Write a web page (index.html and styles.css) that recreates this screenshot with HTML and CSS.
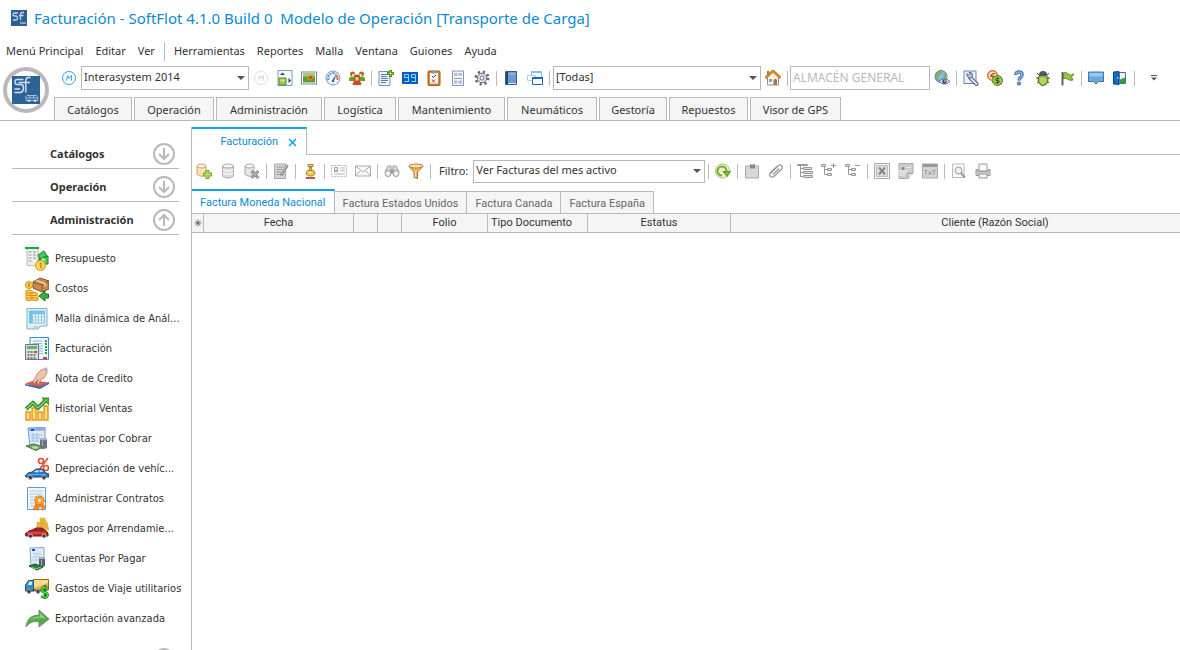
FILE: index.html
```html
<!DOCTYPE html>
<html lang="es">
<head>
<meta charset="utf-8">
<meta name="viewport" content="width=device-width, initial-scale=1">
<title>Facturación - SoftFlot</title>
<link rel="stylesheet" href="styles.css">
</head>
<body>
<header class="header">
  <div class="titlebar">
    <svg class="icon" viewBox="0 0 16 16"><rect width="16" height="16" fill="#2c5f95"/><path d="M7 3H3.500Q2 3 2 4.500T3.500 6H5Q6.500 6 6.500 8T5 10H2M13 2.500H11Q9.500 2.500 9.500 5V10M8 5.500H12.500" fill="none" stroke="#c3d3e3" stroke-width="1.300"/><path d="M9 12h6v2H9z" fill="#86a4c2"/></svg>
    <h1 class="title">Facturación - SoftFlot 4.1.0 Build 0&nbsp; Modelo de Operación [Transporte de Carga]</h1>
  </div>
  <nav class="menu" aria-label="Menú">
    <button class="menu-item">Menú Principal</button>
    <button class="menu-item">Editar</button>
    <button class="menu-item">Ver</button>
    <span class="menu-sep"></span>
    <button class="menu-item">Herramientas</button>
    <button class="menu-item">Reportes</button>
    <button class="menu-item">Malla</button>
    <button class="menu-item">Ventana</button>
    <button class="menu-item">Guiones</button>
    <button class="menu-item">Ayuda</button>
  </nav>
  <div class="ribbon">
    <button class="app-logo" aria-label="SoftFlot">
      <svg viewBox="0 0 46 46"><circle cx="23" cy="23" r="21" fill="#fff" stroke="#b9b9b9" stroke-width="4"/><rect x="9" y="9" width="28" height="28" fill="#2d6299"/><path d="M20.500 12.500H14Q12 12.500 12 15T14 17.500H18Q20.500 17.500 20.500 21T18 25.500H11.500M22 15.500H15.500M11.500 22H17M27.500 10.500H25.500Q22.800 10.500 22.800 14V25.500M20.500 15.500H27" fill="none" stroke="#d7e2ee" stroke-width="1.400"/><path d="M24 28.500h9.500q1.500 2 1.500 5H23v-4z" fill="none" stroke="#a9c0d8"/><path d="M24 31h10.500M27 28.500v2.500M30.500 28.500v2.500" stroke="#a9c0d8"/><circle cx="26" cy="33.800" r="1.300" fill="#cfdbe8"/><circle cx="32" cy="33.800" r="1.300" fill="#cfdbe8"/></svg>
    </button>
    <div class="ribbon-body">
      <div class="toolbar main-tools" role="toolbar">
        <button class="tool" aria-label="Modelo"><svg class="icon" viewBox="0 0 16 16"><circle cx="8" cy="8" r="6.500" fill="#fff" stroke="#29a4ea"/><path d="M5.500 10.500L6.500 5.500L8 8.500L10.500 5.500V10.500" fill="none" stroke="#29a4ea"/></svg></button>
        <span class="combo combo-company"><select class="field" aria-label="Empresa"><option>Interasystem 2014</option></select></span>
        <button class="tool" aria-label="Modelo inactivo"><svg class="icon" viewBox="0 0 16 16"><circle cx="8" cy="8" r="6.500" fill="#fff" stroke="#ddd"/><path d="M5.500 10.500L6.500 5.500L8 8.500L10.500 5.500V10.500" fill="none" stroke="#d5d5d5"/></svg></button>
        <button class="tool" aria-label="Distribución"><svg class="icon" viewBox="0 0 16 16"><rect x="1" y=".5" width="14" height="15" fill="#f3f6fc" stroke="#8b98b8"/><path d="M2 8h7v7H2z" fill="#9bcb4e" stroke="#5c8f28"/><path d="M3.500 9.500h4v2h-4z" fill="#c9e891"/><path d="M3 5L5.500 2.500L8 5zM11.500 8L14 10.500L11.500 13z" fill="#333d55"/></svg></button>
        <button class="tool" aria-label="Imagen"><svg class="icon" viewBox="0 0 16 16"><rect x=".5" y="2" width="15" height="12" fill="#fff" stroke="#7684a3"/><path d="M2 3.500h12v9H2z" fill="#5a9b35"/><path d="M2 3.500h12v3H2z" fill="#9ed06f"/><path d="M8.500 4L10 5.500L12 5L11.500 7L13 8.500L11 9L10 11L8.500 9.300L6 9.500L7 7.500L6 5.500L8 5.800z" fill="#f58d28"/><circle cx="9.500" cy="7.500" r="1.300" fill="#8c3e15"/></svg></button>
        <button class="tool" aria-label="Indicadores"><svg class="icon" viewBox="0 0 16 16"><circle cx="8" cy="8" r="7" fill="#eef5fd" stroke="#7696c5"/><path d="M3.500 10A5 5 0 0 1 11 4" fill="none" stroke="#4e8ed2" stroke-width="2" stroke-dasharray="2 1"/><path d="M11.500 5Q13 7 12.500 10" fill="none" stroke="#e4633a" stroke-width="2"/><path d="M6.500 11.500L11.500 3.500L8.500 12.500z" fill="#37507b"/></svg></button>
        <button class="tool" aria-label="Usuarios"><svg class="icon" viewBox="0 0 16 16"><path d="M0 8Q3 5 6 8V11H0zM10 8Q13 5 16 8V11H10z" fill="#669e2d"/><circle cx="3.500" cy="4" r="2.500" fill="#b36a29"/><circle cx="12.500" cy="4" r="2.500" fill="#b36a29"/><path d="M3 4h2.500v2.500H3zM10.500 4H13v2.500h-2.500z" fill="#ffd194"/><path d="M3.500 15Q4 10 8 10T12.500 15z" fill="#d5462e"/><circle cx="8" cy="7.500" r="3" fill="#99531d"/><path d="M6.500 7h3v2.500L8 11L6.500 9.500z" fill="#ffcf91"/></svg></button>
        <span class="sep"></span>
        <button class="tool" aria-label="Nuevo documento"><svg class="icon" viewBox="0 0 16 16"><path d="M1 1.500h11v14H1z" fill="#eef4fd" stroke="#7993bf"/><path d="M3 4.500h6M3 6.500h6M3 8.500h7M3 10.500h7M3 12.500h5" stroke="#5578b2"/><path d="M12.500 0v7M9 3.500h7" stroke="#4e8d19" stroke-width="3"/><path d="M12.500 1v5M10 3.500h5" stroke="#a9d950"/></svg></button>
        <button class="tool" aria-label="Contador"><svg class="icon" viewBox="0 0 16 16"><path d="M0 2h16v12H0z" fill="#075fc6"/><path d="M6.500 7.500H2.500V4.500H6.500V11.500H2.500M13.500 7.500H9.500V4.500H13.500V11.500H9.500" fill="none" stroke="#8cdcff"/></svg></button>
        <button class="tool" aria-label="Pendientes"><svg class="icon" viewBox="0 0 16 16"><rect x="2" y="1" width="12" height="14.500" rx="1" fill="#d98432" stroke="#a55c1d"/><path d="M4 3h8v10.500H4z" fill="#fff"/><path d="M6 .5h4v3H6z" fill="#8c98ac"/><path d="M6 9.500l3 3M9 9.500l-3 3" fill="none" stroke="#bc3028"/><path d="M6 6l1.500 1.500L10 5" fill="none" stroke="#333"/></svg></button>
        <button class="tool" aria-label="Formulario"><svg class="icon" viewBox="0 0 16 16"><path d="M2.500 1h11v14.500h-11z" fill="#f4f6fb" stroke="#8796b8"/><path d="M4 3h3.500v3H4zM8.500 3H12v3H8.500zM4 10.500h3.500v3H4zM8.500 10.500H12v3H8.500z" fill="#b2bfd8"/><path d="M4 8.500h8" stroke="#8c9cc0"/></svg></button>
        <button class="tool" aria-label="Configuración"><svg class="icon" viewBox="0 0 16 16"><circle cx="8" cy="8" r="6.200" fill="none" stroke="#636b7b" stroke-width="2.600" stroke-dasharray="2.200 2.670"/><circle cx="8" cy="8" r="4.700" fill="#dce1ea" stroke="#687286"/><circle cx="8" cy="8" r="2" fill="#fff" stroke="#687286"/></svg></button>
        <span class="sep"></span>
        <button class="tool" aria-label="Catálogo"><svg class="icon" viewBox="0 0 16 16"><path d="M2.500 1.500h11v13h-11z" fill="#6f9bca" stroke="#355d8f"/><path d="M3 2h2v12H3z" fill="#244570"/><path d="M5 13.500h8" stroke="#dce6f0"/><path d="M6 3h6v2H6z" fill="#8fb2d8"/></svg></button>
        <button class="tool" aria-label="Ventanas"><svg class="icon" viewBox="0 0 16 16"><path d="M4.500 1.500h10v6h-10z" fill="#fff" stroke="#8abbe9"/><path d="M4 2h11" stroke="#8abbe9" stroke-width="2"/><path d="M.5 5.500h8v5h-8z" fill="#fff" stroke="#a6ceef"/><path d="M5.500 7.500h10v7h-10z" fill="#fff" stroke="#1268c4"/><path d="M5 8h11" stroke="#1268c4" stroke-width="2"/></svg></button>
        <span class="sep"></span>
        <span class="combo combo-branch"><select class="field" aria-label="Sucursal"><option>[Todas]</option></select></span>
        <button class="tool" aria-label="Inicio"><svg class="icon" viewBox="0 0 16 16"><path d="M2.500 7L8 2L13.500 7V15H2.500z" fill="#fff5df" stroke="#8995ad"/><path d="M.5 8L8 1L15.500 8" fill="none" stroke="#c96a17" stroke-width="2.600"/><path d="M1 8L8 1.500L15 8" fill="none" stroke="#f5a947"/><path d="M2 1h2v4H2z" fill="#c96a17"/><path d="M8.500 15V10Q10.500 7.500 12 10V15z" fill="#b3723b"/><path d="M4 9h3v3H4z" fill="#6ca8dc"/></svg></button>
        <span class="sep"></span>
        <input class="field warehouse" aria-label="Almacén" placeholder="ALMACÉN GENERAL">
        <button class="tool" aria-label="Web"><svg class="icon" viewBox="0 0 16 16"><circle cx="7" cy="6.500" r="6" fill="#83bce7" stroke="#5879a4"/><path d="M3 2Q6 0 8 2L6 5L3.500 6L5 10L4 11Q0 7 3 2zM9 4L12 3L13 7L10 8z" fill="#7fb44c"/><path d="M5 11.500Q10.500 6 16 11.500Q10.500 17 5 11.500z" fill="#dce3ee" stroke="#66728d"/><circle cx="10.500" cy="11.500" r="2.200" fill="#344873"/><circle cx="11" cy="11" r=".8" fill="#fff"/></svg></button>
        <span class="sep"></span>
        <button class="tool" aria-label="Opciones"><svg class="icon" viewBox="0 0 16 16"><path d="M1 1h12v12.500H1z" fill="#eef4fd" stroke="#6e80ac"/><path d="M7 7.500L13.500 14" stroke="#526386" stroke-width="4" stroke-linecap="round"/><path d="M7 7.500L13.500 14" stroke="#dbe2ec" stroke-width="2" stroke-linecap="round"/><path d="M4 3.500L6 5.500L7.500 4L6 2.500Q9.500 2 9.500 5Q9.500 8.500 6 8Q3.500 7 4 3.500z" fill="#c9d2df" stroke="#526386"/></svg></button>
        <button class="tool" aria-label="Monedas"><svg class="icon" viewBox="0 0 16 16"><circle cx="5.500" cy="5.500" r="5" fill="#f1a66c" stroke="#b96026"/><circle cx="5.500" cy="5.500" r="3.700" fill="#ffe1bd"/><path d="M8 3.500Q4.500 2.500 4.500 5.500T8 7.500M3 5h4M3 6.500h4" fill="none" stroke="#b64f22"/><circle cx="10.500" cy="10.500" r="5" fill="#9cc94a" stroke="#4e7d21"/><path d="M12.500 8.500Q8.500 7.500 8.500 9.200T10.500 10.500T12.300 12T8.500 12.500M10.500 7v7" fill="none" stroke="#355c14"/></svg></button>
        <button class="tool" aria-label="Ayuda"><svg class="icon" viewBox="0 0 16 16"><path d="M5 5Q4.500 2 8 2T11 5Q11 6.500 9.500 7.500T8 10.500" fill="none" stroke="#48689f" stroke-width="3.400"/><path d="M5 4.500Q5 2 8 2T11 5Q11 6.500 9.500 7.500T8 10" fill="none" stroke="#82b9ec" stroke-width="1.500"/><circle cx="8" cy="13.500" r="1.600" fill="#6297d3" stroke="#48689f"/></svg></button>
        <button class="tool" aria-label="Depurar"><svg class="icon" viewBox="0 0 16 16"><path d="M2 3l3 3M14 3l-3 3M1 8h3M12 8h3M2 13l3-2M14 13l-3-2" stroke="#424b38"/><ellipse cx="8" cy="9.700" rx="5" ry="5.800" fill="#91bd38" stroke="#466818"/><path d="M4 5Q4 1 8 1T12 5Q8 8 4 5z" fill="#505865"/><path d="M8 6v9M6 8v5M10 8v5" stroke="#d4ec8b"/></svg></button>
        <button class="tool" aria-label="Bandera"><svg class="icon" viewBox="0 0 16 16"><path d="M3.500 2v13.500" stroke="#596778" stroke-width="2"/><path d="M4.500 3Q7 1.500 9 4T15 4L12.500 7L14 10Q10.500 11 8.500 9T4.500 9z" fill="#9ac43b" stroke="#5b8926"/></svg></button>
        <span class="sep"></span>
        <button class="tool" aria-label="Mensajes"><svg class="icon" viewBox="0 0 16 16"><path d="M.5 2h15v9.500h-5L8 14L5.500 11.500h-5z" fill="#69a9dd" stroke="#3f76a9"/><path d="M1.500 3h13v3.500h-13z" fill="#97c9ee"/></svg></button>
        <button class="tool" aria-label="Salir"><svg class="icon" viewBox="0 0 16 16"><path d="M7 2.500h6.500v11H7z" fill="#eef3fb" stroke="#616b82"/><path d="M8 9.500l5-2V13H8z" fill="#23a43b"/><path d="M1.500 2L7 1.500V14.500L1.500 14z" fill="#126fc6" stroke="#084689"/><path d="M5 8h1.500" stroke="#fff"/></svg></button>
        <span class="sep"></span>
        <button class="tool overflow" aria-label="Más"><svg class="icon" viewBox="0 0 16 16"><path d="M5 5.500h6" stroke="#555"/><path d="M5 7.500h6L8 10.500z" fill="#555"/></svg></button>
      </div>
      <nav class="modules" aria-label="Módulos">
        <button class="module">Catálogos</button>
        <button class="module">Operación</button>
        <button class="module">Administración</button>
        <button class="module">Logística</button>
        <button class="module">Mantenimiento</button>
        <button class="module">Neumáticos</button>
        <button class="module">Gestoría</button>
        <button class="module">Repuestos</button>
        <button class="module">Visor de GPS</button>
      </nav>
    </div>
  </div>
</header>
<div class="workspace">
  <aside class="sidebar">
    <button class="group">Catálogos<svg class="chev" viewBox="0 0 24 24"><circle cx="12" cy="12" r="10"/><path d="M12 6v11M7 12l5 5l5-5"/></svg></button>
    <button class="group">Operación<svg class="chev" viewBox="0 0 24 24"><circle cx="12" cy="12" r="10"/><path d="M12 6v11M7 12l5 5l5-5"/></svg></button>
    <button class="group" aria-expanded="true">Administración<svg class="chev" viewBox="0 0 24 24"><circle cx="12" cy="12" r="10"/><path d="M12 18V7M7 12l5-5l5 5"/></svg></button>
    <nav class="links" aria-label="Administración">
      <a class="link" href="#presupuesto"><svg class="big" viewBox="0 0 24 24"><path d="M2 1h11v18l-2-1l-2 1l-2-1l-2 1l-3-1z" fill="#eee" stroke="#bbb"/><path d="M0 1h14" stroke="#12a83a" stroke-width="2"/><path d="M3.500 5h3M8 5h3M3.500 8h3M8 8h3M3.500 11h3M8 11h3M3.500 14h3" stroke="#999"/><path d="M13 8l6-4l3 5l-7 4zM14 12l9-3v8H13z" fill="#43cb53" stroke="#12852a"/><circle cx="18" cy="13" r="2" fill="#a7f09b"/><circle cx="15.500" cy="18.500" r="5" fill="#ffd35c" stroke="#dc911c"/><path d="M14.500 17l1.500-1v5.500" fill="none" stroke="#b46811"/></svg><span class="link-text">Presupuesto</span></a>
      <a class="link" href="#costos"><svg class="big" viewBox="0 0 24 24"><path d="M8 5l7-4l9 3v8l-7 3l-9-4z" fill="#c88a4c" stroke="#80522a"/><path d="M8 5l9 3l7-4M17 8v7" fill="none" stroke="#8a5728"/><path d="M11 3.500l9 3v3" fill="none" stroke="#efd3a4" stroke-width="1.500"/><circle cx="4" cy="8" r="3.500" fill="#ffcf52" stroke="#d68c19"/><path d="M4 6v4" stroke="#a96613"/><g fill="#ffd35b" stroke="#d68c19"><ellipse cx="4" cy="22" rx="3.500" ry="1.500"/><ellipse cx="4" cy="19.500" rx="3.500" ry="1.500"/><ellipse cx="4" cy="17" rx="3.500" ry="1.500"/><ellipse cx="4" cy="14.500" rx="3.500" ry="1.500"/><ellipse cx="10" cy="22" rx="3.500" ry="1.500"/><ellipse cx="10" cy="19.500" rx="3.500" ry="1.500"/><ellipse cx="9" cy="17" rx="3.500" ry="1.500"/></g><path d="M14 19l6-5v3h3.500v4H20v3z" fill="#38b33a" stroke="#11721f"/></svg><span class="link-text">Costos</span></a>
      <a class="link" href="#malla"><svg class="big" viewBox="0 0 24 24"><path d="M2 1.500h20V19h-6l-3 3H2z" fill="#e1f1f5" stroke="#8fabb7"/><path d="M4.500 4h15v12h-15z" fill="#fff" stroke="#7bbfe7"/><path d="M4.500 4h15v3h-15zM4.500 4h3v12h-3z" fill="#63c4f3"/><path d="M7.500 4v12M10.500 4v12M13.500 4v12M16.500 4v12M4.500 7h15M4.500 10h15M4.500 13h15" stroke="#8ac6e2"/><path d="M9 19l-1 4l8-4z" fill="#bfcfd6"/></svg><span class="link-text">Malla dinámica de Anál...</span></a>
      <a class="link" href="#facturacion"><svg class="big" viewBox="0 0 24 24"><path d="M5 .5h18.500v22H5z" fill="#eff6ff" stroke="#4586d4"/><path d="M8 4h9M8 6.500h9M14 9h4M14 11.500h4M14 14h4M14 16.500h4" stroke="#92b7e7"/><path d="M21 3v15" stroke="#12a447" stroke-width="2" stroke-dasharray="2 1"/><path d="M18 21h4" stroke="#e93030" stroke-width="2"/><path d="M.5 7.500h13v15H.5z" fill="#dce2df" stroke="#6d7872"/><path d="M2 9h10v3H2z" fill="#64b267"/><path d="M2.500 15h9M2.500 18h9M2.500 21h9" stroke="#7b847f" stroke-width="2" stroke-dasharray="2 1"/><path d="M10 15h2" stroke="#e23e30" stroke-width="2"/></svg><span class="link-text">Facturación</span></a>
      <a class="link" href="#nota"><svg class="big" viewBox="0 0 24 24"><path d="M0 16.500l9-3l15 2l-9 5.500z" fill="#e35854"/><path d="M0 17l15 2.500l9-4.500v2l-9 5L0 18.500z" fill="#426fa8"/><path d="M9 13l3-6l4-4q3-2 5 0l1 3l-3 5l-3 1l-2 5l-2-.5l1-4l-3 4l-2-.5z" fill="#f0c1a4" stroke="#9b7465" stroke-width=".7"/><path d="M18 2l4-2l1 5z" fill="#aeb4c2"/></svg><span class="link-text">Nota de Credito</span></a>
      <a class="link" href="#historial"><svg class="big" viewBox="0 0 24 24"><g fill="#ffe182" stroke="#e49415" stroke-width="1.400"><path d="M1 15h4v8H1zM7 11h4v12H7zM13 15h4v8h-4zM19 9h4v14h-4z"/></g><path d="M1 12L8 6L13 11L21 3" fill="none" stroke="#298b2d" stroke-width="4"/><path d="M17 1h7v7z" fill="#48b33e" stroke="#298b2d"/><path d="M1 12L8 6L13 11L21 3" fill="none" stroke="#83d663" stroke-width="1.500"/></svg><span class="link-text">Historial Ventas</span></a>
      <a class="link" href="#cobrar"><svg class="big" viewBox="0 0 24 24"><path d="M3 1l17-.5v20H5z" fill="#d9e9fa" stroke="#7396c1"/><path d="M3 1l17-.5v3L3 4z" fill="#83aee3"/><path d="M6 3h3" stroke="#3246c9" stroke-width="2"/><path d="M6 8h11M6 11h9M6 14h8M8 6v9M12 6v9" stroke="#a4bfdc"/><path d="M15 12h7v9q-4 2-7 0z" fill="#697480"/><ellipse cx="18.500" cy="12" rx="3.500" ry="1.300" fill="#aeb9c3"/><path d="M17.500 14v7" stroke="#a4adb5"/><path d="M1 19l8-2l9 3l-7 3.500z" fill="#77aa61" stroke="#3d773e"/><ellipse cx="10" cy="20.500" rx="3" ry="1.200" fill="#c1dfab"/></svg><span class="link-text">Cuentas por Cobrar</span></a>
      <a class="link" href="#depreciacion"><svg class="big" viewBox="0 0 24 24"><g fill="none" stroke="#e34c27" stroke-width="1.600"><circle cx="16" cy="4" r="2.500"/><circle cx="21" cy="11" r="2.500"/><path d="M23 1L14 13"/></g><path d="M0 19l3-3l4-1l4-3h6l4 4l3 1v3H1z" fill="#2a74bd" stroke="#174981"/><path d="M8.500 15l3-2h2v2.500zM14.500 13h2l2 2h-4z" fill="#bddcf5"/><path d="M2 17.500h19" stroke="#68aee9"/><circle cx="5.500" cy="20.500" r="2" fill="#333" stroke="#aaa"/><circle cx="19" cy="20.500" r="2" fill="#333" stroke="#aaa"/></svg><span class="link-text">Depreciación de vehíc...</span></a>
      <a class="link" href="#contratos"><svg class="big" viewBox="0 0 24 24"><path d="M2.500 .5h18v22h-18z" fill="#edf6ff" stroke="#5e9ddd"/><path d="M5 4h13M5 7h13M5 10h6M5 13h4M5 16h4M5 19h4" stroke="#b1c4d8"/><path d="M11 16L8 23l3-1l2 1.500l2-5l3 5l1-2.500h2l-4-5z" fill="#f88b24" stroke="#df641d" stroke-width=".6"/><circle cx="14.500" cy="13.500" r="4.500" fill="#ffb437" stroke="#e46d1e" stroke-width="1.500" stroke-dasharray="2 .7"/><circle cx="14.500" cy="13.500" r="2.300" fill="#ffe28e" stroke="#e9842c"/></svg><span class="link-text">Administrar Contratos</span></a>
      <a class="link" href="#arrendamiento"><svg class="big" viewBox="0 0 24 24"><g fill="#ffd95c" stroke="#d9911f" stroke-width=".6"><path d="M12 5h5v2h-5zM12 7h5v2h-5zM12 9h5v2h-5zM15 1h5v2h-5zM15.500 3h5v2h-5zM17 5h5v2h-5zM17.500 7h5v2h-5zM18 9h5v2h-5zM18.500 11h5v2h-5z"/></g><path d="M0 17l4-3l3-1l4-2h6l4 3l2 2v3H1z" fill="#c22520" stroke="#7c1015"/><path d="M8 14l3-2h2v2zM14 12h3l2 2h-5z" fill="#57383b"/><path d="M2 16h19" stroke="#ee6b59"/><circle cx="5.500" cy="19" r="2" fill="#333" stroke="#bbb"/><circle cx="19" cy="19" r="2" fill="#333" stroke="#bbb"/></svg><span class="link-text">Pagos por Arrendamie...</span></a>
      <a class="link" href="#pagar"><svg class="big" viewBox="0 0 24 24"><path d="M5 1l14-.5v18L6 20z" fill="#dcecfb" stroke="#88a7cc"/><path d="M7 3h3" stroke="#2845ce" stroke-width="2"/><path d="M8 7h8M8 10h7M8 13h5" stroke="#a4bfdc"/><path d="M14 11h6v8q-3 2-6 0z" fill="#55616d"/><ellipse cx="17" cy="11" rx="3" ry="1.200" fill="#a9b5bf"/><path d="M16.500 13v7" stroke="#a7b3bd"/><path d="M4 19l6-2l8 3l-6 3z" fill="#278338" stroke="#155325"/><path d="M6 20l5 2l5-2" fill="none" stroke="#8fca92"/></svg><span class="link-text">Cuentas Por Pagar</span></a>
      <a class="link" href="#gastos"><svg class="big" viewBox="0 0 24 24"><path d="M8.500 2.500h15V13h-15z" fill="#edab42" stroke="#9c681e"/><path d="M9 3h14v3L9 11z" fill="#ffd990"/><path d="M.5 8l3-4.500h5V14h-8z" fill="#348bc8" stroke="#195984"/><path d="M2.500 8l2-3.500h2.500V8z" fill="#c7e9fb"/><path d="M1 13.500h17" stroke="#444" stroke-width="1.500"/><circle cx="4" cy="14.500" r="2" fill="#333" stroke="#aaa"/><circle cx="13" cy="14.500" r="2" fill="#333" stroke="#aaa"/><path d="M23 11.500Q17 9.500 17 12.500T20 15.500T22.500 18.500T16 19.500M20 8v14" fill="none" stroke="#17852a" stroke-width="2.600"/><path d="M23 11.500Q17 9.500 17 12.500T20 15.500T22.500 18.500T16 19.500" fill="none" stroke="#5ed84f" stroke-width="1.300"/></svg><span class="link-text">Gastos de Viaje utilitarios</span></a>
      <a class="link" href="#exportacion"><svg class="big" viewBox="0 0 24 24"><path d="M1 20Q2 8 14 8V3L24 12L14 20V15Q6 13 1 20z" fill="#58a94d" stroke="#73906f"/><path d="M4 14Q8 9.500 15 9.500V6L21 11.500Q10 10 4 14z" fill="#8bcd79"/></svg><span class="link-text">Exportación avanzada</span></a>
    </nav>
    <button class="group" aria-label="Siguiente grupo"><svg class="chev" viewBox="0 0 24 24"><circle cx="12" cy="12" r="10"/><path d="M12 6v11M7 12l5 5l5-5"/></svg></button>
  </aside>
  <main class="document">
    <div class="doc-tabs">
      <div class="doc-tab"><span>Facturación</span><button class="close" aria-label="Cerrar"><svg viewBox="0 0 9 9"><path d="M1 1l7 7M8 1l-7 7" stroke="#0ba3ee" stroke-width="1.500"/></svg></button></div>
    </div>
    <div class="toolbar doc-tools" role="toolbar">
      <button class="tool" aria-label="Agregar"><svg class="icon" viewBox="0 0 16 16"><path d="M1 3v8.500Q5.500 15 10 11.500V3z" fill="#fae1b5" stroke="#cda16b"/><ellipse cx="5.500" cy="3" rx="4.500" ry="2" fill="#fff2d8" stroke="#cda16b"/><path d="M11.500 7v9M7 11.500h9" stroke="#75a72b" stroke-width="4"/><path d="M11.500 8v7M8 11.500h7" stroke="#b7dc62" stroke-width="2"/></svg></button>
      <button class="tool" aria-label="Datos"><svg class="icon" viewBox="0 0 16 16"><path d="M2.500 3v10Q8 17 13.500 13V3z" fill="#ddd" stroke="#aaa"/><ellipse cx="8" cy="3" rx="5.500" ry="2" fill="#f5f5f5" stroke="#aaa"/><path d="M2.500 6.500Q8 9.500 13.500 6.500M2.500 10Q8 13 13.500 10" fill="none" stroke="#fff"/></svg></button>
      <button class="tool" aria-label="Eliminar"><svg class="icon" viewBox="0 0 16 16"><path d="M1 3v8.500Q5.500 15 10 11.500V3z" fill="#e6e6e6" stroke="#aaa"/><ellipse cx="5.500" cy="3" rx="4.500" ry="2" fill="#f6f6f6" stroke="#aaa"/><path d="M7.500 8l7 7M14.500 8l-7 7" stroke="#888" stroke-width="3"/><path d="M7.500 8l7 7M14.500 8l-7 7" stroke="#c5c5c5"/></svg></button>
      <span class="sep"></span>
      <button class="tool" aria-label="Modificar"><svg class="icon" viewBox="0 0 16 16"><path d="M1.500 1h11v14.500h-11z" fill="#d5d5d5" stroke="#aaa"/><path d="M3.500 4h7M3.500 6.500h6M3.500 9h4M3.500 11.500h3" stroke="#999"/><path d="M8 12.500L14.500 2" stroke="#8c8c8c" stroke-width="3"/><path d="M8.500 11L14 2" stroke="#ccc"/></svg></button>
      <span class="sep"></span>
      <button class="tool" aria-label="Timbrar"><svg class="icon" viewBox="0 0 16 16"><path d="M4 15h9" stroke="#b45a49" stroke-width="2"/><ellipse cx="8.500" cy="10" rx="4.300" ry="3" fill="#edc654" stroke="#af7f23"/><path d="M7.500 7.500V4h2v3.500z" fill="#f0cb5f" stroke="#af7f23"/><path d="M6 1.500h5v2H6z" fill="#f5dc85" stroke="#af7f23"/><path d="M6 9.500h4" stroke="#fff0a6"/></svg></button>
      <span class="sep"></span>
      <button class="tool" aria-label="Contacto"><svg class="icon" viewBox="0 0 16 16"><path d="M.5 2.500h15v11H.5z" fill="#fafafa" stroke="#bbb" stroke-dasharray="2 1"/><path d="M3 4h4v5H3z" fill="#aaa"/><circle cx="5" cy="6" r="1" fill="#fff"/><path d="M9 5h5M9 7.500h5M3 11h11" stroke="#bbb"/></svg></button>
      <button class="tool" aria-label="Correo"><svg class="icon" viewBox="0 0 16 16"><path d="M.5 3h15v10H.5z" fill="#fafafa" stroke="#aaa"/><path d="M.5 3L8 9L15.500 3M1 12.500L5.500 7.500M15 12.500L10.500 7.500" fill="none" stroke="#aaa"/></svg></button>
      <span class="sep"></span>
      <button class="tool" aria-label="Buscar"><svg class="icon" viewBox="0 0 16 16"><path d="M1 9L4 3h3v8M15 9l-3-6H9v8" fill="#ddd" stroke="#999"/><circle cx="4" cy="10.500" r="3" fill="#eee" stroke="#999"/><circle cx="12" cy="10.500" r="3" fill="#eee" stroke="#999"/><path d="M7 6h2v4H7z" fill="#999"/></svg></button>
      <button class="tool" aria-label="Filtrar"><svg class="icon" viewBox="0 0 16 16"><path d="M1 3.500L6 9v5.500l3.500 1V9L15 3.500z" fill="#edb46b" stroke="#b97836"/><ellipse cx="8" cy="3" rx="7" ry="2" fill="#ffe1ad" stroke="#b97836"/><path d="M7.500 8v6" stroke="#ffe0b2"/></svg></button>
      <span class="sep"></span>
      <label class="filter-label" for="filtro">Filtro:</label>
      <span class="combo combo-filter"><select class="field" id="filtro"><option>Ver Facturas del mes activo</option></select></span>
      <span class="sep"></span>
      <button class="tool" aria-label="Actualizar"><svg class="icon" viewBox="0 0 16 16"><circle cx="7.500" cy="8" r="7" fill="#e8f5c9" stroke="#a1ca64"/><path d="M7 12.500A4.500 4.500 0 1 1 11.500 8" fill="none" stroke="#76aa38" stroke-width="2"/><path d="M8 8.500h7.500L12 13.500z" fill="#80b83b" stroke="#5e942c"/></svg></button>
      <span class="sep"></span>
      <button class="tool" aria-label="Nota"><svg class="icon" viewBox="0 0 16 16"><path d="M1.500 3h13v12h-13z" fill="#d8d8d8" stroke="#aaa"/><path d="M6 1h5v4.500H6z" fill="#888"/><path d="M7 1.500h3" stroke="#ccc"/></svg></button>
      <button class="tool" aria-label="Adjuntar"><svg class="icon" viewBox="0 0 16 16"><path d="M3 10L10 3Q12 1 13.500 2.500T13.500 6L6.500 13Q4.500 15 2.500 13.500T2.500 9.500L9.500 3M5 11.500L11 5.500" fill="none" stroke="#999" stroke-width="1.300"/></svg></button>
      <span class="sep"></span>
      <button class="tool" aria-label="Árbol"><svg class="icon" viewBox="0 0 16 16"><path d="M3.500 2v12M4 5.500h2M4 9.500h2M4 13.500h2" stroke="#999"/><path d="M.5 1.500h10v1H.5zM6.500 4.500h8v2h-8zM6.500 8.500h9v2h-9zM6.500 12.500h9v2h-9z" fill="#ddd" stroke="#999"/></svg></button>
      <button class="tool" aria-label="Expandir"><svg class="icon" viewBox="0 0 16 16"><path d="M.5 1.500h4v2h-4zM6.500 5.500h4v2h-4zM6.500 10.500h4v2h-4z" fill="#ddd" stroke="#999"/><path d="M3.500 4v7.500H6M3.500 6.500H6M12.500 0v5M10 2.500h5" fill="none" stroke="#999"/></svg></button>
      <button class="tool" aria-label="Contraer"><svg class="icon" viewBox="0 0 16 16"><path d="M.5 1.500h4v2h-4zM6.500 5.500h4v2h-4zM6.500 10.500h4v2h-4z" fill="#ddd" stroke="#999"/><path d="M3.500 4v7.500H6M3.500 6.500H6M10 2.500h5" fill="none" stroke="#999"/></svg></button>
      <span class="sep"></span>
      <button class="tool" aria-label="Excel"><svg class="icon" viewBox="0 0 16 16"><path d="M.5 .5h15v15H.5z" fill="#f5f5f5" stroke="#aaa"/><path d="M2.500 2.500h11v11h-11z" fill="#ddd" stroke="#bbb"/><path d="M5 4.500l6 7M11 4.500l-6 7" stroke="#888" stroke-width="2"/></svg></button>
      <button class="tool" aria-label="Imagen"><svg class="icon" viewBox="0 0 16 16"><path d="M1 .5h14V10l-5 5.500H1z" fill="#ccc" stroke="#aaa"/><path d="M1 7h10l-5 6H1z" fill="#ddd"/><circle cx="5" cy="5.500" r="1.500" fill="#888"/><path d="M8 4.500h5" stroke="#eee"/><path d="M10 15V10.500h5" fill="#eee" stroke="#999"/></svg></button>
      <button class="tool" aria-label="Texto"><svg class="icon" viewBox="0 0 16 16"><path d="M.5 1h15v14H.5z" fill="#d5d5d5" stroke="#aaa"/><path d="M1 2.500h14" stroke="#999" stroke-width="3"/><path d="M2.500 7.500h3M4 7.500V12M6.500 8.500l3 3.500M9.500 8.500l-3 3.500M10.500 7.500h3M12 7.500V12" stroke="#999" fill="none"/></svg></button>
      <span class="sep"></span>
      <button class="tool" aria-label="Vista previa"><svg class="icon" viewBox="0 0 16 16"><path d="M1.500 1h11.500v13.500H1.500z" fill="#fafafa" stroke="#bbb"/><circle cx="7.500" cy="7.500" r="3.500" fill="#eee" stroke="#999"/><path d="M10 10l4 4.500" stroke="#999" stroke-width="2"/></svg></button>
      <button class="tool" aria-label="Imprimir"><svg class="icon" viewBox="0 0 16 16"><path d="M4 1h8v7H4z" fill="#fafafa" stroke="#999"/><path d="M1 6.500h2v2h10v-2h2v6H1z" fill="#ccc" stroke="#999"/><path d="M4 11h8v4H4z" fill="#f5f5f5" stroke="#999"/></svg></button>
    </div>
    <div class="sheets" role="tablist">
      <button class="sheet active" role="tab" aria-selected="true">Factura Moneda Nacional</button>
      <button class="sheet" role="tab">Factura Estados Unidos</button>
      <button class="sheet" role="tab">Factura Canada</button>
      <button class="sheet" role="tab">Factura España</button>
    </div>
    <div class="grid-area">
      <table class="grid">
        <colgroup><col class="c-mark"><col class="c-date"><col class="c-flag"><col class="c-flag"><col class="c-folio"><col class="c-type"><col class="c-status"><col class="c-client"></colgroup>
        <thead><tr>
          <th scope="col"><svg class="mark" viewBox="0 0 8 8"><path d="M4 .5v7M.5 4h7M1.500 1.500l5 5M6.500 1.500l-5 5" stroke="#555" stroke-width=".8"/></svg></th>
          <th scope="col">Fecha</th><th></th><th></th><th scope="col">Folio</th><th scope="col" class="start">Tipo Documento</th><th scope="col">Estatus</th><th scope="col">Cliente (Razón Social)</th>
        </tr></thead>
      </table>
    </div>
  </main>
</div>
</body>
</html>
```

FILE: styles.css
```css
* { box-sizing: border-box; }

:root {
  --line: #b9b9b9;
  --accent: #0ba3ee;
  --accent-text: #0a8ad8;
  --panel: #f5f5f5;
  --ui: "Noto Sans", "Open Sans", sans-serif;
  --small: "DejaVu Sans Condensed", "Noto Sans", sans-serif;
}

body {
  margin: 0;
  height: 100vh;
  display: flex;
  flex-direction: column;
  overflow: hidden;
  background: #fff;
  color: #333;
  font: 11px/16px var(--ui);
}

button, select, input {
  font: inherit;
  color: inherit;
  margin: 0;
  padding: 0;
  border: 0;
  border-radius: 0;
  background: none;
}

svg { display: block; flex: none; }
.icon { width: 16px; height: 16px; }
.header { flex: none; border-bottom: 1px solid var(--line); }

.titlebar {
  display: flex;
  align-items: center;
  gap: 7px;
  height: 36px;
  padding-left: 11px;
}
.title { margin: 0; font-size: 15px; font-weight: 400; line-height: 22px; color: var(--accent-text); white-space: nowrap; }

.menu { display: flex; align-items: center; gap: 12px; height: 30px; padding-left: 6px; }
.menu-item { white-space: nowrap; }
.menu-sep { width: 1px; height: 19px; margin: 0 -3px; background: var(--line); }

.ribbon { display: flex; }
.app-logo { flex: none; width: 46px; height: 46px; margin: 1px 5px 0 3px; }
.ribbon-body { flex: 1; min-width: 0; }

.toolbar { display: flex; align-items: center; }
.tool { flex: none; width: 24px; height: 24px; display: flex; align-items: center; justify-content: center; }
.sep { flex: none; width: 1px; height: 15px; margin: 0 2px; background: var(--line); }
.main-tools { height: 24px; padding-left: 3px; }
.overflow { margin-left: 5px; }

.field { display: block; width: 100%; height: 24px; border: 1px solid var(--line); background: #fff; appearance: none; outline: 0; }
.combo { position: relative; flex: none; }
.combo select { padding: 0 20px 2px 2px; }
.combo::after {
  content: "";
  position: absolute;
  right: 4px;
  top: 50%;
  margin-top: -2px;
  border: 4px solid transparent;
  border-top-color: #555;
  border-bottom-width: 0;
  pointer-events: none;
}
.combo-company { width: 168px; }
.combo-branch { width: 208px; margin-left: 1px; }
.combo-filter { width: 232px; margin-right: 1px; }
.combo-filter .field { height: 23px; }
.warehouse { flex: none; width: 140px; padding: 0 2px 2px; font-size: 12px; }
.warehouse::placeholder { color: #b9b9b9; opacity: 1; }

.modules {
  display: grid;
  grid-template-columns: 78px 80px 106px 72px 107px 90px 68px 79px 91px;
  gap: 2px;
  padding-top: 7px;
}
.module { height: 23px; padding-top: 2px; border: 1px solid var(--line); border-bottom: 0; background: var(--panel); white-space: nowrap; }

.workspace { flex: 1; min-height: 0; display: flex; }
.sidebar { flex: none; width: 191px; padding: 15px 12px 0; overflow: hidden; }
.group {
  display: flex;
  align-items: center;
  justify-content: space-between;
  width: 167px;
  height: 33px;
  padding: 4px 3px 0 38px;
  border-bottom: 1px solid var(--line);
  font-weight: 700;
}
.chev { width: 24px; height: 24px; margin-left: auto; fill: none; stroke: #b9b9b9; stroke-width: 2; }
.links { padding: 9px 0 7px 13px; }
.link { display: flex; align-items: center; gap: 6px; height: 30px; color: inherit; text-decoration: none; font-family: var(--small); }
.big { width: 24px; height: 24px; }
.link-text { white-space: nowrap; }

.document { flex: 1; min-width: 0; display: flex; flex-direction: column; border-left: 1px solid var(--line); margin-top: 6px; }
.doc-tabs { display: flex; height: 28px; border-bottom: 1px solid var(--line); font: 11px/16px Roboto, sans-serif; }
.doc-tab {
  display: flex;
  align-items: center;
  justify-content: flex-end;
  gap: 10px;
  width: 115px;
  height: 28px;
  padding-right: 9px;
  border-top: 2px solid var(--accent);
  border-right: 1px solid var(--line);
  background: #fff;
  color: var(--accent-text);
}
.close { width: 9px; height: 9px; }
.doc-tools { height: 34px; padding-bottom: 2px; }
.filter-label { margin: 0 5px 0 6px; white-space: nowrap; }

.sheets { display: flex; align-items: flex-end; height: 24px; }
.sheet {
  height: 22px;
  padding: 2px 8px 0;
  border: 1px solid var(--line);
  border-bottom: 0;
  border-left: 0;
  background: var(--panel);
  font: 11px/16px Roboto, sans-serif;
  color: #666;
  white-space: nowrap;
}
.sheet.active { height: 24px; border-top: 2px solid var(--accent); background: #fff; color: var(--accent-text); }

.grid-area { flex: 1; overflow: hidden; border-top: 1px solid var(--line); }
.grid { width: 1068px; border-collapse: separate; border-spacing: 0; table-layout: fixed; font: 11px/16px Roboto, sans-serif; }
.grid th {
  height: 19px;
  padding: 0;
  border-right: 1px solid var(--line);
  border-bottom: 1px solid var(--line);
  background: var(--panel);
  font-weight: 400;
  white-space: nowrap;
}
.grid .start { padding-left: 3px; text-align: left; }
.mark { width: 8px; height: 8px; margin: 0 auto; }
.c-mark { width: 12px; }
.c-date { width: 150px; }
.c-flag { width: 24px; }
.c-folio { width: 86px; }
.c-type { width: 100px; }
.c-status { width: 143px; }
.c-client { width: 529px; }
```
